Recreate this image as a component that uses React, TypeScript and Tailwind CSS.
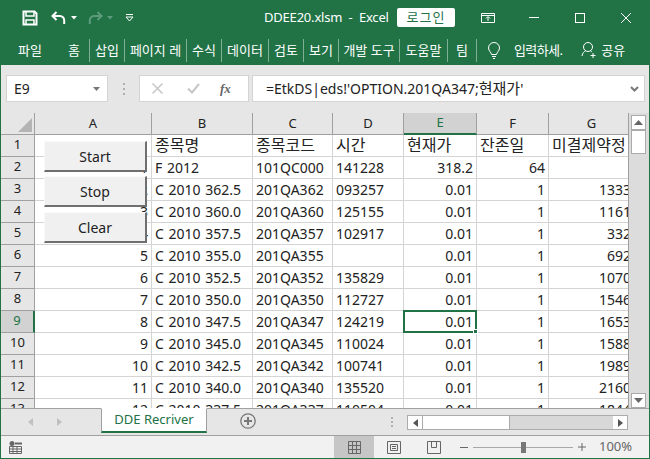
const tabs = [
  { t: "파일", w: "w-[58px]" },
  { t: "홈", w: "w-[30px]" },
  { t: "삽입", w: "w-[34px]" },
  { t: "페이지 레", w: "w-[61px]" },
  { t: "수식", w: "w-[34px]" },
  { t: "데이터", w: "w-[46px]" },
  { t: "검토", w: "w-[34px]" },
  { t: "보기", w: "w-[34px]" },
  { t: "개발 도구", w: "w-[60px]" },
  { t: "도움말", w: "w-[47px]" },
  { t: "팀", w: "w-[28px]" },
];

const columns = ["A", "B", "C", "D", "E", "F", "G"];

const rows = [
  ["", "종목명", "종목코드", "시간", "현재가", "잔존일", "미결제약정"],
  ["1", "F 2012", "101QC000", "141228", "318.2", "64", ""],
  ["2", "C 2010 362.5", "201QA362", "093257", "0.01", "1", "1333"],
  ["3", "C 2010 360.0", "201QA360", "125155", "0.01", "1", "1161"],
  ["4", "C 2010 357.5", "201QA357", "102917", "0.01", "1", "332"],
  ["5", "C 2010 355.0", "201QA355", "", "0.01", "1", "692"],
  ["6", "C 2010 352.5", "201QA352", "135829", "0.01", "1", "1070"],
  ["7", "C 2010 350.0", "201QA350", "112727", "0.01", "1", "1546"],
  ["8", "C 2010 347.5", "201QA347", "124219", "0.01", "1", "1653"],
  ["9", "C 2010 345.0", "201QA345", "110024", "0.01", "1", "1588"],
  ["10", "C 2010 342.5", "201QA342", "100741", "0.01", "1", "1989"],
  ["11", "C 2010 340.0", "201QA340", "135520", "0.01", "1", "2160"],
  ["12", "C 2010 337.5", "201QA337", "110504", "0.01", "1", "1844"],
];

const Sep = () => <div className="h-[23px] w-px bg-[#7fb095]" />;

const SheetButton = ({ label, className }: any) => (
  <div
    className={`absolute left-[43px] flex h-[31px] w-[103px] items-center justify-center border-t border-r-2 border-b-2 border-l border-t-[#fafafa] border-r-[#6f6f6f] border-b-[#6f6f6f] border-l-[#fafafa] bg-[#f0f0f0] text-[14px] text-[#222] ${className}`}
  >
    {label}
  </div>
);

const Dots = ({ className }: any) => (
  <div className={`flex flex-col ${className}`}>
    <div className="h-[2px] w-[2px] bg-[#b0b0b0]" />
    <div className="h-[2px] w-[2px] bg-[#b0b0b0]" />
    <div className="h-[2px] w-[2px] bg-[#b0b0b0]" />
  </div>
);

export default function App() {
  return (
    <div className="flex h-[459px] w-[650px] flex-col overflow-hidden border-x border-b border-[#217346] bg-[#e6e6e6] font-['Noto_Sans','Noto_Sans_CJK_KR',sans-serif] text-[#222]">
      {/* Title bar */}
      <div className="flex h-[35px] shrink-0 items-center bg-[#217346] text-white">
        <svg width="16" height="16" viewBox="0 0 16 16" className="ml-[21px]" fill="none">
          <path d="M1.5 1.5h11l2 2v11h-13z" stroke="white" strokeWidth="2" />
          <path d="M4 2v4h8V2" stroke="white" strokeWidth="1.5" />
          <path d="M4 14v-4h8v4" stroke="white" strokeWidth="1.5" />
        </svg>
        <svg width="16" height="14" viewBox="0 0 16 14" className="ml-[13px]" fill="none">
          <path d="M5.5 1 1.5 5l4 4" stroke="white" strokeWidth="2" />
          <path d="M2 5h7a4.2 4.2 0 0 1 4.2 4.2V13" stroke="white" strokeWidth="2" />
        </svg>
        <svg width="6" height="4" viewBox="0 0 6 4" className="ml-[4px]"><path d="M0 0h6L3 3.5z" fill="white" /></svg>
        <svg width="16" height="14" viewBox="0 0 16 14" className="ml-[10px]" fill="none">
          <path d="M10.5 1l4 4-4 4" stroke="#5c9c7c" strokeWidth="2" />
          <path d="M14 5H7a4.2 4.2 0 0 0-4.2 4.2V13" stroke="#5c9c7c" strokeWidth="2" />
        </svg>
        <svg width="6" height="4" viewBox="0 0 6 4" className="ml-[4px]"><path d="M0 0h6L3 3.5z" fill="#5c9c7c" /></svg>
        <svg width="9" height="8" viewBox="0 0 9 8" className="ml-[12px]" fill="none">
          <path d="M1 .5h7" stroke="white" />
          <path d="M1 3h7L4.5 7z" stroke="white" strokeWidth="1" />
        </svg>
        <div className="ml-[130px] w-[120px] whitespace-nowrap text-[13px] tracking-[-0.2px]">DDEE20.xlsm&nbsp; -&nbsp; Excel</div>
        <div className="ml-[13px] flex h-[19px] w-[58px] items-center justify-center rounded-[2px] bg-white text-[13px] tracking-[1px] text-[#217346]">로그인</div>
        <svg width="14" height="12" viewBox="0 0 14 12" className="ml-[26px]" fill="none" stroke="white">
          <path d="M.5 1.5h13v9H.5zM.5 3.5h13" />
          <path d="M7 9V5M5 6.5l2-2 2 2" />
        </svg>
        <div className="ml-[34px] h-px w-[10px] bg-white" />
        <div className="ml-[36px] h-[10px] w-[10px] border border-white" />
        <svg width="10" height="10" viewBox="0 0 10 10" className="ml-[36px]" stroke="white"><path d="M0 0l10 10M10 0L0 10" /></svg>
      </div>

      {/* Ribbon tabs */}
      <div className="flex h-[30px] shrink-0 items-center bg-[#217346] pt-[1px] text-[13px] text-white">
        {tabs.map((tab, i) => (
          <div key={tab.t} className="flex items-center">
            {i > 1 && <Sep />}
            <div className={`flex justify-center ${tab.w} whitespace-nowrap`}>{tab.t}</div>
          </div>
        ))}
        <Sep />
        <svg width="14" height="18" viewBox="0 0 14 18" className="ml-[10px]" fill="none" stroke="white">
          <path d="M4.5 12.5c0-2-3-3.5-3-6.5a5.5 5.5 0 0 1 11 0c0 3-3 4.5-3 6.5z" />
          <path d="M5 14.5h4M6 16.5h2" />
        </svg>
        <div className="ml-[13px] whitespace-nowrap text-[13px] tracking-[-0.6px]">입력하세.</div>
        <svg width="16" height="17" viewBox="0 0 16 17" className="ml-[19px]" fill="none" stroke="white">
          <circle cx="7" cy="5" r="4.5" />
          <path d="M1 14c.5-3 2-4.5 3.5-5M9.5 9c.6.2 1 .5 1.5 1M12 11v5M9.5 13.5h5" />
        </svg>
        <div className="ml-[4px] whitespace-nowrap text-[13px]">공유</div>
      </div>

      {/* Formula bar */}
      <div className="flex h-[37px] shrink-0 items-start pt-[10px] text-[14px]">
        <div className="ml-[5px] flex h-[27px] w-[102px] items-center justify-between border border-[#d4d4d4] bg-white px-[7px]">
          <span>E9</span>
          <svg width="7" height="4" viewBox="0 0 7 4"><path d="M0 0h7L3.5 4z" fill="#777" /></svg>
        </div>
        <Dots className="mt-[8px] w-[31px] items-center gap-[3px]" />
        <div className="flex h-[27px] w-[110px] items-center border border-[#d4d4d4] bg-white">
          <svg width="11" height="11" viewBox="0 0 11 11" className="ml-[12px]" stroke="#c6c6c6" strokeWidth="1.5"><path d="M.5.5l10 10M10.5.5l-10 10" /></svg>
          <svg width="13" height="11" viewBox="0 0 13 11" className="ml-[24px]" fill="none" stroke="#c6c6c6" strokeWidth="2"><path d="M1 5.5l4 4 7-8.5" /></svg>
          <span className="ml-[20px] font-['Liberation_Serif',serif] text-[13px] font-bold text-[#666] italic">fx</span>
        </div>
        <div className="ml-[3px] flex h-[27px] w-[393px] items-center justify-between border border-[#d4d4d4] bg-white pr-[5px] pl-[13px]">
          <span className="whitespace-nowrap text-[14px]">=EtkDS|eds!'OPTION.201QA347;<span className="text-[15px]">현재가</span>'</span>
          <svg width="9" height="6" viewBox="0 0 9 6" fill="none" stroke="#777" strokeWidth="2"><path d="M1 1l3.5 3.5L8 1" /></svg>
        </div>
      </div>

      <div className="h-[11px] shrink-0" />

      {/* Sheet and vertical scrollbar */}
      <div className="flex h-[295px] shrink-0 overflow-hidden">
        <div className="relative h-full w-[628px] shrink-0 overflow-hidden border-r border-[#a0a0a0] bg-white">
          <div className="grid w-[640px] grid-cols-[34px_117px_101px_80px_71px_73px_72px_86px] grid-rows-[22px_repeat(13,22px)] text-[14px]">
            {/* Column headers */}
            <div className="flex items-end justify-end border-r border-b border-[#a0a0a0] bg-[#e6e6e6] pr-[2px] pb-[2px]">
              <svg width="14" height="14" viewBox="0 0 14 14"><path d="M14 0v14H0z" fill="#b4b4b4" /></svg>
            </div>
            {columns.map((c) => (
              <div
                key={c}
                className={`flex items-center justify-center border-r border-b text-[13px] ${
                  c === "E"
                    ? "border-r-[#a0a0a0] border-b-2 border-b-[#217346] bg-[#d2d2d2] text-[#217346]"
                    : "border-[#a0a0a0] bg-[#e6e6e6]"
                }`}
              >
                {c}
              </div>
            ))}
            {/* Rows */}
            {rows.map((row, r) => [
              <div
                key={`h${r}`}
                className={`flex items-center justify-center border-b pb-[1px] text-[13px] ${
                  r === 8
                    ? "border-r-2 border-r-[#217346] border-b-[#a0a0a0] bg-[#d2d2d2] text-[#217346]"
                    : "border-r border-[#a0a0a0] bg-[#e6e6e6]"
                }`}
              >
                {r + 1}
              </div>,
              ...row.map((v, c) => (
                <div
                  key={`${r}-${c}`}
                  className={`relative flex items-center overflow-hidden border-r border-b border-[#d4d4d4] px-[3px] pb-[1px] whitespace-nowrap ${
                    r === 0
                      ? "justify-start text-[16px]"
                      : c === 1
                        ? "justify-start [word-spacing:1px]"
                        : c === 2 || c === 3
                          ? "justify-start"
                          : "justify-end"
                  }`}
                >
                  {v}
                </div>
              )),
            ])}
          </div>

          {/* Active cell E9 */}
          <div className="absolute top-[197px] left-[402px] h-[23px] w-[74px] border-2 border-[#217346]">
            <div className="absolute -right-[3px] -bottom-[3px] h-[5px] w-[5px] border border-white bg-[#217346]" />
          </div>

          {/* Macro buttons */}
          <SheetButton label="Start" className="top-[28px]" />
          <SheetButton label="Stop" className="top-[63px]" />
          <SheetButton label="Clear" className="top-[99px]" />
        </div>

        {/* Vertical scrollbar */}
        <div className="flex w-[20px] flex-col items-start bg-[#dcdcdc] pt-[2px] pl-[2px]">
          <div className="flex h-[15px] w-[15px] items-center justify-center border border-[#ababab] bg-white">
            <svg width="9" height="5" viewBox="0 0 9 5"><path d="M0 5h9L4.5 0z" fill="#666" /></svg>
          </div>
          <div className="h-[24px] w-[15px] border border-[#ababab] bg-white" />
          <div className="flex-1" />
          <div className="flex h-[15px] w-[15px] items-center justify-center border border-[#ababab] bg-white">
            <svg width="9" height="5" viewBox="0 0 9 5"><path d="M0 0h9L4.5 5z" fill="#666" /></svg>
          </div>
        </div>
      </div>

      {/* Sheet tabs */}
      <div className="flex h-[28px] shrink-0 items-start border-t border-b border-[#a0a0a0] bg-[#e6e6e6]">
        <svg width="6" height="8" viewBox="0 0 6 8" className="mt-[9px] ml-[27px]"><path d="M5 0v8L0 4z" fill="#c0c0c0" /></svg>
        <svg width="6" height="8" viewBox="0 0 6 8" className="mt-[9px] ml-[23px]"><path d="M0 0v8l5-4z" fill="#c0c0c0" /></svg>
        <div className="-mt-px ml-[38px] flex h-[25px] w-[106px] items-center justify-center border-x border-t border-x-[#a0a0a0] border-t-white border-b-2 border-b-[#217346] bg-white text-[13px] text-[#217346]">DDE Recriver</div>
        <svg width="16" height="16" viewBox="0 0 16 16" className="mt-[4px] ml-[33px]" fill="none" stroke="#777">
          <circle cx="8" cy="8" r="7.2" strokeWidth="1.3" />
          <path d="M8 4v8M4 8h8" strokeWidth="2" />
        </svg>
        <Dots className="mt-[8px] ml-[135px] gap-[2px]" />
        <div className="mt-[6px] ml-[14px] flex h-[15px] w-[221px] items-center border border-[#ababab] bg-[#d8d8d8]">
          <div className="flex h-full w-[14px] items-center justify-center bg-white">
            <svg width="5" height="8" viewBox="0 0 5 8"><path d="M5 0v8L0 4z" fill="#555" /></svg>
          </div>
          <div className="h-full w-[88px] border-x border-[#ababab] bg-white" />
          <div className="flex-1" />
          <div className="flex h-full w-[14px] items-center justify-center bg-white">
            <svg width="5" height="8" viewBox="0 0 5 8"><path d="M0 0v8l5-4z" fill="#555" /></svg>
          </div>
        </div>
      </div>

      {/* Status bar */}
      <div className="flex min-h-0 flex-1 items-center bg-[#f1f1f1] text-[#666]">
        <svg width="13" height="13" viewBox="0 0 13 13" className="ml-[8px]" fill="none">
          <circle cx="3" cy="2.5" r="2.5" fill="#666" />
          <path d="M6 1.5h7v2H6z" fill="#666" />
          <path d="M.5 5.5h12v7H.5zM.5 8h12M.5 10.5h12M4 5.5v7M8 5.5v7" stroke="#666" />
        </svg>
        <div className="ml-[312px] flex h-full w-[40px] items-center justify-center bg-[#c6c6c6]">
          <svg width="13" height="13" viewBox="0 0 13 13" fill="none" stroke="#666">
            <path d="M.5.5h12v12H.5zM.5 4.5h12M.5 8.5h12M4.5.5v12M8.5.5v12" />
          </svg>
        </div>
        <svg width="14" height="13" viewBox="0 0 14 13" className="ml-[13px]" fill="none" stroke="#666">
          <path d="M.5.5h13v12H.5zM3.5 3.5h7v6h-7zM5 5.5h4M5 7.5h4" />
        </svg>
        <svg width="14" height="13" viewBox="0 0 14 13" className="ml-[26px]" fill="none" stroke="#666">
          <path d="M.5.5h13v12H.5zM4.5.5v6h5v-6" />
        </svg>
        <div className="ml-[19px] h-px w-[8px] bg-[#666]" />
        <div className="relative ml-[5px] h-px w-[100px] bg-[#a8a8a8]">
          <div className="absolute top-[-5px] left-[48px] h-[11px] w-[5px] bg-[#777]" />
        </div>
        <svg width="8" height="8" viewBox="0 0 8 8" className="ml-[5px]" stroke="#666"><path d="M0 4h8M4 0v8" /></svg>
        <div className="ml-[13px] text-[13px]">100%</div>
      </div>
    </div>
  );
}
